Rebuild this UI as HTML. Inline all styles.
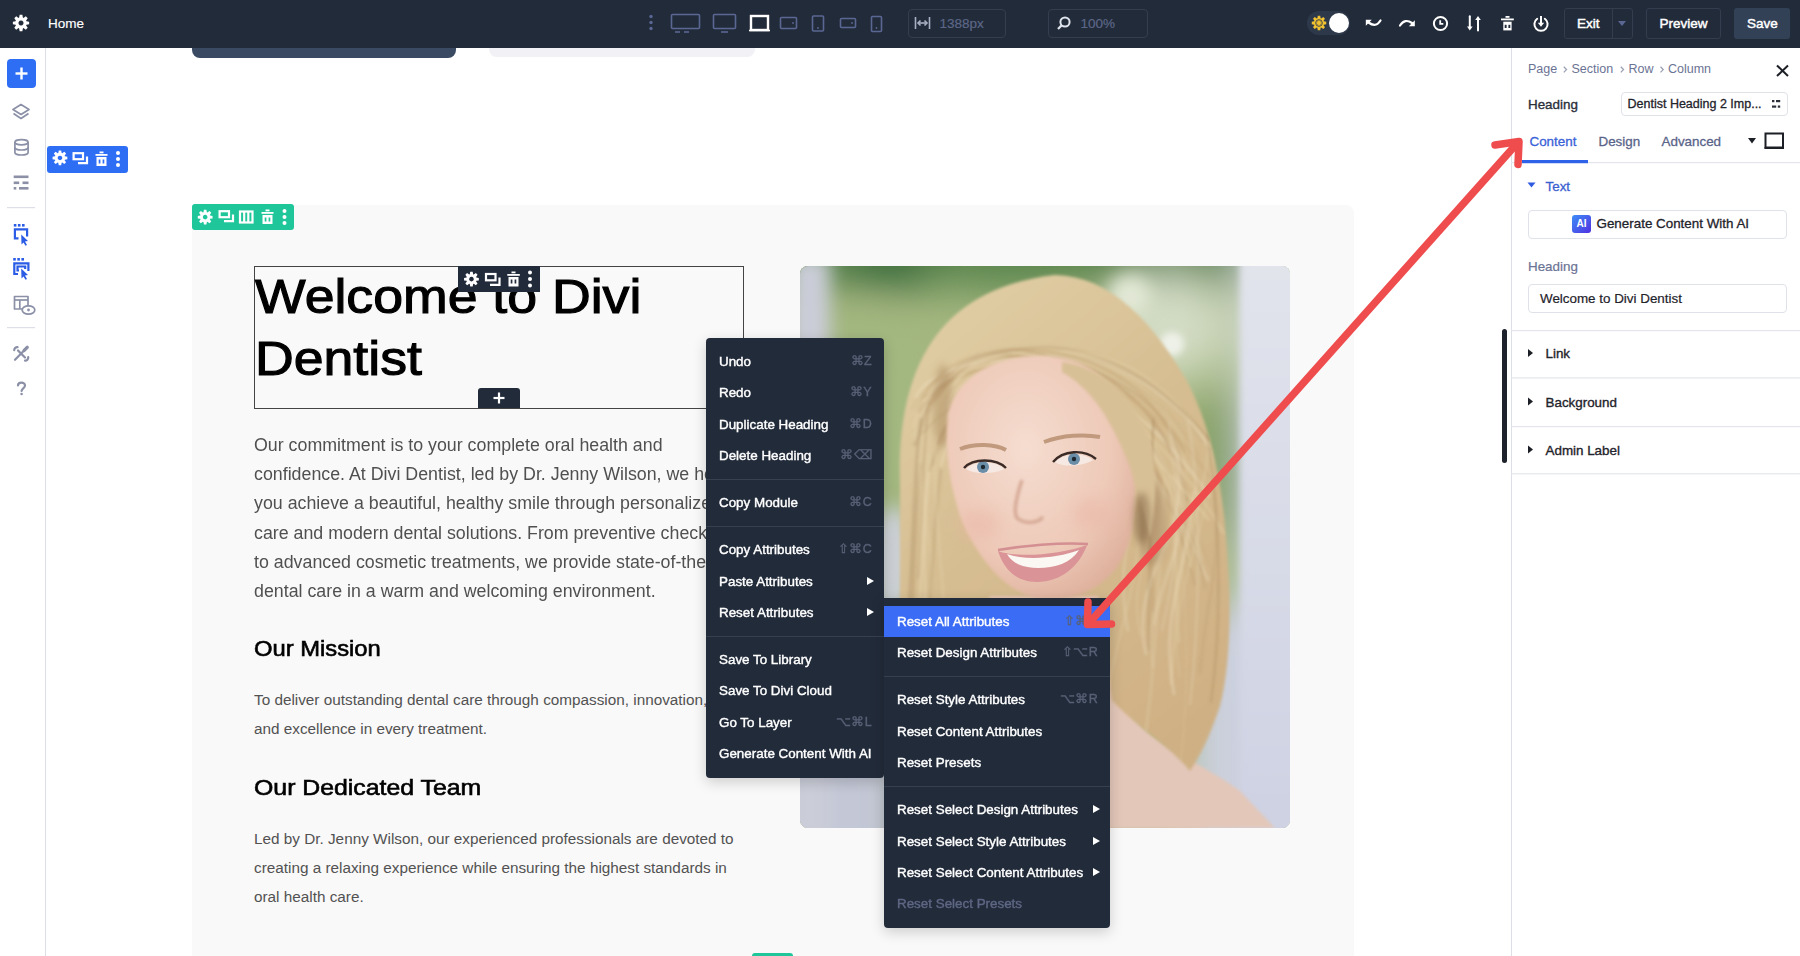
<!DOCTYPE html>
<html><head><meta charset="utf-8">
<style>
*{box-sizing:border-box;margin:0;padding:0}
html,body{width:1800px;height:956px;overflow:hidden;background:#fff;font-family:"Liberation Sans",sans-serif}
.a{position:absolute}
#top{z-index:10;left:0;top:0;width:1800px;height:48px;background:#222b3a}
#side{left:0;top:48px;width:46px;height:908px;background:#fff;border-right:1px solid #dcdfe6}
#canvas{left:46px;top:48px;width:1465px;height:908px;background:#fff;overflow:hidden}
#panel{left:1511px;top:48px;width:289px;height:908px;background:#fff;box-shadow:inset 1px 0 0 #dcdfe6}
.tb{color:#fff;font-size:13.5px;font-weight:normal;-webkit-text-stroke:0.45px #fff;white-space:nowrap}
.pt{white-space:nowrap;line-height:normal}
.ic{stroke:#5b6793;fill:none;stroke-width:1.6}
.mi{position:absolute;left:0;width:100%;height:31.4px;color:#fff;font-size:13.4px;font-weight:normal;-webkit-text-stroke:0.4px currentColor;padding-left:13px;line-height:31.4px;white-space:nowrap}
.mi .k{position:absolute;right:12px;top:0;color:#586176;-webkit-text-stroke:0.35px #586176;font-size:12.5px;letter-spacing:0.3px}
.mi .tri{position:absolute;right:10px;top:11px;width:0;height:0;border-left:7px solid #fff;border-top:4.5px solid transparent;border-bottom:4.5px solid transparent}
.sep{position:absolute;left:0;width:100%;height:1px;background:#36404f}
.body{color:#505050;font-size:17.5px;line-height:29.2px}
.body2{color:#525252;font-size:15.5px;line-height:29.2px}
.h2{color:#000;font-size:22.5px}
</style></head><body>

<svg width="0" height="0" style="position:absolute">
<defs>
<path id="gear" fill-rule="evenodd" d="M9.52 4.82 L10.19 1.15 L13.81 1.15 L14.48 4.82 L15.32 5.17 L18.40 3.05 L20.95 5.60 L18.83 8.68 L19.18 9.52 L22.85 10.19 L22.85 13.81 L19.18 14.48 L18.83 15.32 L20.95 18.40 L18.40 20.95 L15.32 18.83 L14.48 19.18 L13.81 22.85 L10.19 22.85 L9.52 19.18 L8.68 18.83 L5.60 20.95 L3.05 18.40 L5.17 15.32 L4.82 14.48 L1.15 13.81 L1.15 10.19 L4.82 9.52 L5.17 8.68 L3.05 5.60 L5.60 3.05 L8.68 5.17Z M12 8.6 A3.4 3.4 0 1 0 12.01 8.6Z"/>
</defs></svg>
<div id="top" class="a">
 <svg class="a" style="left:12px;top:14px" width="18" height="18" viewBox="0 0 24 24"><use href="#gear" fill="#fff"/></svg>
 <div class="a tb" style="left:48px;top:15.8px;font-size:13.5px;-webkit-text-stroke:0.15px #fff">Home</div>
 <!-- dots -->
 <svg class="a" style="left:647px;top:14px" width="8" height="17"><circle cx="4" cy="2.5" r="1.7" fill="#5b6793"/><circle cx="4" cy="8.5" r="1.7" fill="#5b6793"/><circle cx="4" cy="14.5" r="1.7" fill="#5b6793"/></svg>
 <!-- device icons -->
 <svg class="a" style="left:660px;top:8px" width="240" height="30">
  <g class="ic">
   <rect x="11.5" y="6.5" width="28" height="14" rx="1"/>
   <line x1="15" y1="24" x2="20" y2="24"/><line x1="24" y1="24" x2="29" y2="24"/>
   <rect x="53.5" y="6.5" width="22" height="14" rx="1"/>
   <line x1="61" y1="24" x2="68" y2="24"/>
   <rect x="120.5" y="9.5" width="16" height="11" rx="1"/>
   <rect x="152.5" y="8" width="11" height="15" rx="1"/>
   <rect x="180.5" y="10.5" width="15" height="9" rx="1"/>
   <rect x="211.5" y="8.5" width="10" height="15" rx="1"/>
  </g>
  <g fill="#5b6793"><circle cx="133" cy="15" r="0.9"/><circle cx="158" cy="20" r="0.9"/><circle cx="192" cy="15" r="0.9"/><circle cx="216.5" cy="20" r="0.9"/></g>
  <rect x="91" y="8" width="17" height="14" fill="none" stroke="#fff" stroke-width="2.4"/>
  <line x1="89" y1="22.5" x2="110" y2="22.5" stroke="#fff" stroke-width="1.6"/>
 </svg>
 <!-- width input -->
 <div class="a" style="left:908px;top:9px;width:98px;height:29px;border:1px solid #343e4f;border-radius:4px"></div>
 <svg class="a" style="left:914px;top:16px" width="18" height="14"><g stroke="#a9b0c4" stroke-width="1.6" fill="none"><line x1="1.5" y1="1" x2="1.5" y2="13"/><line x1="15.5" y1="1" x2="15.5" y2="13"/><line x1="4" y1="7" x2="13" y2="7"/><polyline points="6.5,4.5 4,7 6.5,9.5"/><polyline points="10.5,4.5 13,7 10.5,9.5"/></g></svg>
 <div class="a" style="left:939.5px;top:15.8px;color:#5c6787;font-size:13.5px;-webkit-text-stroke:0.2px #5c6787">1388px</div>
 <!-- zoom input -->
 <div class="a" style="left:1048px;top:9px;width:100px;height:29px;border:1px solid #343e4f;border-radius:4px"></div>
 <svg class="a" style="left:1056px;top:15px" width="16" height="16"><circle cx="9" cy="7" r="4.6" stroke="#dfe3ec" stroke-width="2" fill="none"/><line x1="5.6" y1="10.4" x2="2" y2="14" stroke="#dfe3ec" stroke-width="2.2"/></svg>
 <div class="a" style="left:1080.5px;top:15.8px;color:#5c6787;font-size:13.5px;-webkit-text-stroke:0.2px #5c6787">100%</div>
 <!-- toggle -->
 <div class="a" style="left:1307px;top:11px;width:43px;height:24px;border-radius:12px;background:#2d394b"></div>
 <svg class="a" style="left:1311px;top:15px" width="16" height="16" viewBox="0 0 24 24"><use href="#gear" fill="#f2c230"/><circle cx="12" cy="12" r="3.2" fill="#f2c230"/><circle cx="12" cy="12" r="5" fill="none" stroke="#2d394b" stroke-width="1.3"/></svg>
 <div class="a" style="left:1329px;top:13px;width:20px;height:20px;border-radius:50%;background:#fff"></div>
 <!-- undo redo etc -->
 <svg class="a" style="left:1362px;top:13px" width="200" height="22">
  <g stroke="#fff" stroke-width="2.2" fill="none" stroke-linecap="round">
   <path d="M18.5 7.5 Q14 15 6.5 9.5"/>
   <path d="M38 12.5 Q43 5 50 10"/>
   <circle cx="78.5" cy="10.5" r="6.6" stroke-width="2"/><polyline points="78.2,7.3 78.2,10.8 81.3,10.8" stroke-width="1.8" stroke-linecap="butt"/>
   <line x1="107.8" y1="3.3" x2="107.8" y2="14" stroke-width="2"/>
   <line x1="116" y1="6" x2="116" y2="17.4" stroke-width="2"/>
   <path d="M182.79 5.79 A6.6 6.6 0 1 1 175.21 5.79" stroke-width="2"/>
   <line x1="179" y1="3" x2="179" y2="10.5" stroke-width="2" stroke-linecap="butt"/>
  </g>
  <g fill="#fff">
   <polygon points="3.8,6.8 9.8,6.8 3.8,12.8"/>
   <polygon points="52.8,7.2 52.8,13.2 46.8,13.2"/>
   <polygon points="105,13.5 110.6,13.5 107.8,17.4"/>
   <polygon points="113.2,7 118.8,7 116,3.1"/>
   <polygon points="175.8,9.8 182.2,9.8 179,13.8"/>
   <rect x="141.3" y="8.7" width="8.3" height="8.7"/><rect x="139" y="5.5" width="12.8" height="1.8"/><rect x="143.5" y="3" width="4" height="1.8"/>
  </g>
  <g fill="#222b3a"><rect x="142.7" y="11.8" width="1.9" height="3.2"/><rect x="146.4" y="11.8" width="1.9" height="3.2"/></g>
 </svg>
 <!-- exit -->
 <div class="a" style="left:1564px;top:8px;width:69px;height:31px;border:1px solid #333d4e;border-radius:3px"></div>
 <div class="a" style="left:1612px;top:8px;width:1px;height:31px;background:#333d4e"></div>
 <div class="a tb" style="left:1577px;top:15.7px">Exit</div>
 <div class="a" style="left:1618px;top:21px;border-top:5px solid #5b6793;border-left:4px solid transparent;border-right:4px solid transparent"></div>
 <div class="a" style="left:1646px;top:8px;width:75px;height:31px;border:1px solid #333d4e;border-radius:3px"></div>
 <div class="a tb" style="left:1659.5px;top:15.7px">Preview</div>
 <div class="a" style="left:1734px;top:8px;width:56px;height:31px;background:#334157;border-radius:3px"></div>
 <div class="a tb" style="left:1747px;top:15.7px">Save</div>
</div>

<!-- SIDEBAR -->
<div id="side" class="a">
 <div class="a" style="left:7px;top:11px;width:29px;height:29px;background:#2e6ef5;border-radius:4px"></div>
 <svg class="a" style="left:0;top:0" width="45" height="420">
  <g stroke="#fff" stroke-width="2.4"><line x1="21.5" y1="19.5" x2="21.5" y2="31.5"/><line x1="15.5" y1="25.5" x2="27.5" y2="25.5"/></g>
  <g stroke="#8b90a7" stroke-width="1.7" fill="none" stroke-linejoin="round">
   <path d="M21 56.5 L29 61.5 L21 66.5 L13 61.5 Z"/>
   <path d="M13.5 65.5 L21 70.5 L28.5 65.5"/>
   <ellipse cx="21.5" cy="94.3" rx="6.6" ry="2.6"/>
   <path d="M14.9 94.3 V104.4 A6.6 2.6 0 0 0 28.1 104.4 V94.3"/>
   <path d="M14.9 99.4 A6.6 2.6 0 0 0 28.1 99.4"/>
   <rect x="14.5" y="248.5" width="13.5" height="12.5"/>
   <line x1="14.5" y1="252" x2="28" y2="252"/><line x1="19.8" y1="252" x2="19.8" y2="261"/>
  </g>
  <g fill="#8b90a7">
   <rect x="13.7" y="127.5" width="14.8" height="2.6"/>
   <rect x="13.7" y="133.5" width="5.5" height="2.6"/><rect x="22.5" y="133.5" width="6" height="2.6"/>
   <rect x="13.7" y="139" width="2.6" height="2.6"/><rect x="19" y="139" width="9.5" height="2.6"/>
  </g>
  <ellipse cx="28.5" cy="262" rx="6.3" ry="4.2" fill="#fff" stroke="#8b90a7" stroke-width="1.7"/>
  <circle cx="28.5" cy="262" r="1.4" fill="#8b90a7"/>
  <g stroke="#dde0e7" stroke-width="1.2"><line x1="7" y1="159.6" x2="35" y2="159.6"/><line x1="7" y1="279.6" x2="35" y2="279.6"/></g>
  <g fill="#2b5ce6">
   <rect x="13.8" y="176" width="2.6" height="2.6"/><rect x="17.9" y="176" width="2.6" height="2.6"/><rect x="22" y="176" width="2.6" height="2.6"/>
   <rect x="13.2" y="210" width="2.6" height="2.6"/><rect x="17.3" y="210" width="2.6" height="2.6"/><rect x="21.4" y="210" width="2.6" height="2.6"/>
   <path d="M21.2 186.5 L28 193 L25 193.6 L27 197 L25.5 197.8 L23.5 194.5 L21.5 196.5Z"/>
   <path d="M21.2 220.5 L28 227 L25 227.6 L27 231 L25.5 231.8 L23.5 228.5 L21.5 230.5Z"/>
  </g>
  <g stroke="#2b5ce6" stroke-width="2.2" fill="none">
   <polyline points="18.5,190.4 14.9,190.4 14.9,181.3 27.1,181.3 27.1,188.5"/>
   <polyline points="18,226 14.3,226 14.3,215.3 28.4,215.3 28.4,223"/>
   <polyline points="19,222.5 17.5,222.5 17.5,218.5 25.2,218.5 25.2,221"/>
  </g>
  <g stroke="#8b90a7" stroke-width="2.2" fill="none" stroke-linecap="round">
   <line x1="26.8" y1="299.8" x2="15" y2="311.8"/>
   <line x1="18" y1="302.5" x2="25" y2="309.5"/>
   <path d="M14.2 302.2 A3 3 0 0 1 17.6 299.2"/>
   <path d="M28.2 309.2 A3 3 0 0 1 25 312.6"/>
   <path d="M18 337.5 C18 333.8 25 333.6 25 337.6 C25 340.2 21.6 340.6 21.6 343"/>
  </g>
  <line x1="27.2" y1="299.4" x2="24.2" y2="302.4" stroke="#8b90a7" stroke-width="3.4" stroke-linecap="round"/>
  <circle cx="21.6" cy="346" r="1.3" fill="#8b90a7"/>
 </svg>
</div>
<!-- CANVAS -->
<div id="canvas" class="a"></div>
<!-- remnants at top -->
<div class="a" style="left:192px;top:40px;width:264px;height:18px;background:#3b4a63;border-radius:0 0 8px 8px"></div>
<div class="a" style="left:489px;top:40px;width:266px;height:17px;background:#f1f1f6;border-radius:0 0 8px 8px"></div>
<!-- blue row toolbar -->
<div class="a" style="left:46.5px;top:146px;width:81.5px;height:26.5px;background:#2e6ef5;border-radius:3px"></div>
<svg class="a" style="left:46px;top:146px" width="82" height="26">
 <use href="#gear" fill="#fff" transform="translate(5.8,3.8) scale(0.68)"/>
 <g stroke="#fff" stroke-width="2.2" fill="none"><rect x="27.6" y="7.2" width="9.4" height="6"/><polyline points="32,17.2 41,17.2 41,10.5"/></g>
 <g fill="#fff"><rect x="50.5" y="11" width="10" height="9"/><rect x="49.5" y="8" width="12" height="1.8"/><rect x="53.5" y="5.5" width="4" height="1.8"/></g>
 <g fill="#2e6ef5"><rect x="52.7" y="13.5" width="1.7" height="4"/><rect x="56.6" y="13.5" width="1.7" height="4"/></g>
 <g fill="#fff"><circle cx="72" cy="7" r="2"/><circle cx="72" cy="13" r="2"/><circle cx="72" cy="19" r="2"/></g>
</svg>
<!-- section -->
<div class="a" style="left:192px;top:205px;width:1162px;height:760px;background:#f9f9f9;border-radius:8px 8px 0 0"></div>
<!-- green toolbar -->
<div class="a" style="left:192px;top:204px;width:102px;height:26px;background:#1fc69a;border-radius:3px"></div>
<svg class="a" style="left:192px;top:204px" width="102" height="26">
 <use href="#gear" fill="#fff" transform="translate(5,5) scale(0.68)"/>
 <g stroke="#fff" stroke-width="2.2" fill="none"><rect x="27.6" y="7.2" width="9.4" height="6"/><polyline points="32,17.2 41,17.2 41,10.5"/>
 <rect x="48" y="7.5" width="12.5" height="11"/><line x1="52.2" y1="7.5" x2="52.2" y2="18.5"/><line x1="56.3" y1="7.5" x2="56.3" y2="18.5"/></g>
 <g fill="#fff"><rect x="70.5" y="11" width="10" height="9"/><rect x="69.5" y="8" width="12" height="1.8"/><rect x="73.5" y="5.5" width="4" height="1.8"/></g>
 <g fill="#1fc69a"><rect x="72.7" y="13.5" width="1.7" height="4"/><rect x="76.6" y="13.5" width="1.7" height="4"/></g>
 <g fill="#fff"><circle cx="92.5" cy="7" r="2"/><circle cx="92.5" cy="13" r="2"/><circle cx="92.5" cy="19" r="2"/></g>
</svg>
<!-- heading module -->
<div class="a" style="left:254px;top:266px;width:490px;height:143px;border:1.3px solid #444"></div>
<div class="a" id="h1" style="left:255px;top:266px;font-size:48px;font-weight:normal;-webkit-text-stroke:1.1px #000;transform:scaleX(1.117);transform-origin:0 0;line-height:62px;color:#000;white-space:nowrap"><span>Welcome to Divi</span><br><span>Dentist</span></div>
<div class="a" style="left:458px;top:266px;width:82px;height:26px;background:#222b3a"></div>
<svg class="a" style="left:458px;top:266px" width="82" height="26">
 <use href="#gear" fill="#fff" transform="translate(5.3,5) scale(0.68)"/>
 <g stroke="#fff" stroke-width="2.2" fill="none"><rect x="28" y="8" width="9.5" height="6.3"/><polyline points="32,18.8 41.5,18.8 41.5,11.5"/></g>
 <g fill="#fff"><rect x="50.5" y="11" width="10" height="9.5"/><rect x="49.3" y="8" width="12.5" height="1.8"/><rect x="53.5" y="5.5" width="4" height="1.8"/></g>
 <g fill="#222b3a"><rect x="52.7" y="13.5" width="1.7" height="4"/><rect x="56.6" y="13.5" width="1.7" height="4"/></g>
 <g fill="#fff"><circle cx="72" cy="6.5" r="2"/><circle cx="72" cy="13" r="2"/><circle cx="72" cy="19.5" r="2"/></g>
</svg>
<div class="a" style="left:478px;top:388px;width:42px;height:20px;background:#222b3a;border-radius:3px 3px 0 0"></div>
<svg class="a" style="left:478px;top:388px" width="42" height="20"><g stroke="#fff" stroke-width="2.2"><line x1="21" y1="4.5" x2="21" y2="15.5"/><line x1="15.5" y1="10" x2="26.5" y2="10"/></g></svg>
<!-- body texts -->
<div class="a body" id="p1" style="left:254px;top:431px;transform:scaleX(1.017);transform-origin:0 0;white-space:nowrap"><span>Our commitment is to your complete oral health and</span><br><span>confidence. At Divi Dentist, led by Dr. Jenny Wilson, we help</span><br><span>you achieve a beautiful, healthy smile through personalized</span><br><span>care and modern dental solutions. From preventive checkups</span><br><span>to advanced cosmetic treatments, we provide state-of-the-art</span><br><span>dental care in a warm and welcoming environment.</span></div>
<div class="a h2" id="h2a" style="left:254px;top:637px;font-weight:normal;-webkit-text-stroke:0.6px #000;font-size:21.5px;transform:scaleX(1.105);transform-origin:0 0;white-space:nowrap"><span>Our Mission</span></div>
<div class="a body2" id="p2" style="left:254px;top:685px;font-size:15.3px;white-space:nowrap"><span>To deliver outstanding dental care through compassion, innovation,</span><br><span>and excellence in every treatment.</span></div>
<div class="a h2" id="h2b" style="left:254px;top:775.5px;font-weight:normal;-webkit-text-stroke:0.6px #000;font-size:21.5px;transform:scaleX(1.155);transform-origin:0 0;white-space:nowrap"><span>Our Dedicated Team</span></div>
<div class="a body2" id="p3" style="left:254px;top:824px;font-size:15.3px;white-space:nowrap"><span>Led by Dr. Jenny Wilson, our experienced professionals are devoted to</span><br><span>creating a relaxing experience while ensuring the highest standards in</span><br><span>oral health care.</span></div>
<!-- bottom green tab -->
<div class="a" style="left:752px;top:953px;width:41px;height:5px;background:#1fc69a;border-radius:3px 3px 0 0"></div>
<!-- PHOTO -->
<div class="a" id="photo" style="left:800px;top:266px;width:490px;height:562px;border-radius:8px;overflow:hidden;background:#b9c49d">
<svg width="490" height="562" viewBox="0 0 490 562">
<defs>
 <filter id="b30" x="-50%" y="-50%" width="200%" height="200%"><feGaussianBlur stdDeviation="22"/></filter>
 <filter id="b12" x="-50%" y="-50%" width="200%" height="200%"><feGaussianBlur stdDeviation="9"/></filter>
 <filter id="b5" x="-50%" y="-50%" width="200%" height="200%"><feGaussianBlur stdDeviation="3.5"/></filter>
 <filter id="b2" x="-50%" y="-50%" width="200%" height="200%"><feGaussianBlur stdDeviation="1.6"/></filter>
 <filter id="b1" x="-50%" y="-50%" width="200%" height="200%"><feGaussianBlur stdDeviation="0.7"/></filter>
 <linearGradient id="hairg" x1="0" y1="0" x2="0.5" y2="1">
  <stop offset="0" stop-color="#e3d1a9"/><stop offset="0.5" stop-color="#d6bd91"/><stop offset="1" stop-color="#cfb084"/>
 </linearGradient>
 <linearGradient id="pillar" x1="0" y1="0" x2="0" y2="1">
  <stop offset="0" stop-color="#e2e4ec"/><stop offset="1" stop-color="#cdd1e2"/>
 </linearGradient>
 <radialGradient id="skin" cx="0.42" cy="0.38" r="0.7">
  <stop offset="0" stop-color="#f5ddd0"/><stop offset="0.65" stop-color="#eec9b8"/><stop offset="1" stop-color="#dcae99"/>
 </radialGradient>
</defs>
<rect width="490" height="562" fill="#a3b67f"/>
<g filter="url(#b30)">
 <rect x="-40" y="-40" width="570" height="55" fill="#4f7c46"/>
 <ellipse cx="100" cy="0" rx="60" ry="22" fill="#2f6335"/>
 <ellipse cx="210" cy="0" rx="90" ry="25" fill="#5a854e"/>
 <ellipse cx="70" cy="150" rx="60" ry="100" fill="#a3b881"/>
 <ellipse cx="370" cy="60" rx="60" ry="55" fill="#d3dcc5"/>
 <ellipse cx="418" cy="200" rx="28" ry="80" fill="#7f9c5d"/>
 <rect x="-40" y="360" width="150" height="300" fill="#c3c7d6"/>
 <rect x="445" y="-40" width="90" height="640" fill="url(#pillar)"/>
 <rect x="390" y="480" width="140" height="140" fill="#d2d6e3"/>
 <rect x="385" y="340" width="80" height="260" fill="#ccd0de"/>
</g>
<rect x="-10" y="-10" width="40" height="590" fill="#cbcdd8" filter="url(#b12)"/>
<rect x="440" y="-10" width="70" height="590" fill="url(#pillar)" filter="url(#b5)"/>
<circle cx="372" cy="78" r="12" fill="#eef1e8" filter="url(#b5)"/>
<circle cx="330" cy="30" r="22" fill="#e2e8d6" filter="url(#b12)"/>
<ellipse cx="92" cy="295" rx="22" ry="55" fill="#ccd0d6" filter="url(#b12)"/>
<!-- neck/chest -->
<path d="M175 300 L315 300 L330 440 C350 480 380 500 400 530 L405 562 L150 562 C160 520 170 480 178 440Z" fill="#e8c6b5" filter="url(#b5)"/>
<path d="M300 415 C330 470 400 495 440 525 L475 562 L290 562Z" fill="#e3c7b9" filter="url(#b2)"/>
<!-- hair mass -->
<path d="M100 220 C96 100 140 22 255 9 C310 10 352 55 387 115 C410 160 424 215 428 300 C432 360 428 410 420 440 C410 470 400 490 390 505 C370 480 335 460 312 434 C306 390 302 350 298 330 L190 330 C180 380 170 440 150 500 L140 562 L96 562 C98 480 100 420 100 330Z" fill="url(#hairg)" filter="url(#b2)"/>
<!-- soft hair texture -->
<clipPath id="hairclip"><path d="M100 220 C96 100 140 22 255 9 C310 10 352 55 387 115 C410 160 424 215 428 300 C432 360 428 410 420 440 C410 470 400 490 390 505 C370 480 335 460 312 434 C306 390 302 350 298 330 L190 330 C180 380 170 440 150 500 L140 562 L96 562 C98 480 100 420 100 330Z"/></clipPath>
<g fill="none" clip-path="url(#hairclip)" filter="url(#b2)" stroke-linecap="round">
<path d="M116 179 C134 59 316 40 403 176" stroke="#a9875a" stroke-width="2.0" opacity="0.32"/>
<path d="M112 171 C187 69 331 45 406 178" stroke="#e9d6ae" stroke-width="1.3" opacity="0.49"/>
<path d="M116 131 C149 75 303 71 409 230" stroke="#f3e8cf" stroke-width="2.6" opacity="0.41"/>
<path d="M130 168 C177 60 355 64 391 199" stroke="#e9d6ae" stroke-width="1.4" opacity="0.35"/>
<path d="M124 160 C167 34 326 50 395 319" stroke="#a9875a" stroke-width="1.3" opacity="0.43"/>
<path d="M133 199 C149 77 332 80 401 304" stroke="#b8976a" stroke-width="2.1" opacity="0.43"/>
<path d="M138 178 C190 71 310 54 410 174" stroke="#a9875a" stroke-width="1.9" opacity="0.42"/>
<path d="M119 146 C174 54 354 70 387 234" stroke="#b8976a" stroke-width="3.0" opacity="0.48"/>
<path d="M121 157 C152 90 357 56 388 207" stroke="#e9d6ae" stroke-width="1.2" opacity="0.48"/>
<path d="M121 133 C162 60 312 41 419 322" stroke="#c9ab7c" stroke-width="2.6" opacity="0.28"/>
<path d="M141 199 C178 62 318 54 409 180" stroke="#efe1c2" stroke-width="3.2" opacity="0.38"/>
<path d="M134 129 C164 54 356 69 383 203" stroke="#a9875a" stroke-width="1.5" opacity="0.33"/>
<path d="M125 131 C181 87 323 66 384 186" stroke="#b8976a" stroke-width="2.7" opacity="0.39"/>
<path d="M131 138 C187 56 338 99 414 218" stroke="#c9ab7c" stroke-width="2.9" opacity="0.44"/>
<path d="M125 135 C176 57 345 55 390 300" stroke="#e9d6ae" stroke-width="2.8" opacity="0.48"/>
<path d="M119 167 C151 37 292 62 392 281" stroke="#b8976a" stroke-width="2.1" opacity="0.51"/>
<path d="M148 153 C143 53 304 62 408 314" stroke="#efe1c2" stroke-width="2.2" opacity="0.43"/>
<path d="M113 179 C185 83 343 75 388 296" stroke="#b8976a" stroke-width="1.4" opacity="0.51"/>
<path d="M129 187 C135 44 360 46 407 244" stroke="#c9ab7c" stroke-width="1.5" opacity="0.48"/>
<path d="M136 152 C163 47 291 108 409 254" stroke="#e9d6ae" stroke-width="2.1" opacity="0.49"/>
<path d="M118 143 C148 51 331 62 399 191" stroke="#c9ab7c" stroke-width="1.9" opacity="0.38"/>
<path d="M146 158 C185 62 327 73 381 240" stroke="#e9d6ae" stroke-width="2.4" opacity="0.46"/>
<path d="M116 176 C137 27 338 65 402 294" stroke="#f3e8cf" stroke-width="1.3" opacity="0.32"/>
<path d="M114 161 C132 74 294 50 424 267" stroke="#e9d6ae" stroke-width="2.6" opacity="0.38"/>
<path d="M129 205 C172 83 356 56 405 321" stroke="#a9875a" stroke-width="1.5" opacity="0.29"/>
<path d="M113 142 C134 69 345 93 387 285" stroke="#c9ab7c" stroke-width="1.9" opacity="0.33"/>
<path d="M342 206 C368 286 326 290 340 370" stroke="#e6d3ab" stroke-width="1.6" opacity="0.36"/>
<path d="M376 191 C395 271 327 308 346 388" stroke="#f1e5ca" stroke-width="2.3" opacity="0.42"/>
<path d="M365 212 C359 292 356 426 339 506" stroke="#e6d3ab" stroke-width="3.4" opacity="0.29"/>
<path d="M354 155 C349 235 350 265 353 345" stroke="#b08f62" stroke-width="2.1" opacity="0.38"/>
<path d="M376 209 C398 289 340 321 353 401" stroke="#efe1c2" stroke-width="1.8" opacity="0.27"/>
<path d="M338 181 C339 261 313 285 328 365" stroke="#efe1c2" stroke-width="2.0" opacity="0.39"/>
<path d="M413 182 C413 262 364 331 380 411" stroke="#e6d3ab" stroke-width="1.8" opacity="0.30"/>
<path d="M414 225 C422 305 407 326 400 406" stroke="#b08f62" stroke-width="2.0" opacity="0.27"/>
<path d="M353 152 C350 232 348 304 349 384" stroke="#9e7e52" stroke-width="1.4" opacity="0.45"/>
<path d="M369 209 C379 289 378 338 371 418" stroke="#e6d3ab" stroke-width="2.0" opacity="0.45"/>
<path d="M394 226 C386 306 359 348 374 428" stroke="#efe1c2" stroke-width="2.6" opacity="0.46"/>
<path d="M369 157 C379 237 381 284 362 364" stroke="#f1e5ca" stroke-width="1.8" opacity="0.33"/>
<path d="M371 169 C400 249 373 278 354 358" stroke="#f1e5ca" stroke-width="1.9" opacity="0.27"/>
<path d="M409 176 C403 256 370 296 379 376" stroke="#e6d3ab" stroke-width="1.8" opacity="0.43"/>
<path d="M338 248 C344 328 297 406 305 486" stroke="#e6d3ab" stroke-width="1.4" opacity="0.48"/>
<path d="M407 169 C421 249 422 356 411 436" stroke="#9e7e52" stroke-width="1.5" opacity="0.43"/>
<path d="M388 155 C403 235 399 359 390 439" stroke="#f1e5ca" stroke-width="1.5" opacity="0.38"/>
<path d="M375 250 C389 330 391 444 376 524" stroke="#e6d3ab" stroke-width="1.4" opacity="0.27"/>
<path d="M129 207 C121 267 128 342 123 402" stroke="#efe1c2" stroke-width="2.3" opacity="0.38"/>
<path d="M131 169 C123 229 121 339 116 399" stroke="#efe1c2" stroke-width="2.4" opacity="0.28"/>
<path d="M133 150 C125 210 125 267 120 327" stroke="#e6d3ab" stroke-width="1.6" opacity="0.38"/>
<path d="M121 198 C113 258 113 379 108 439" stroke="#b08f62" stroke-width="2.6" opacity="0.38"/>
<path d="M129 136 C121 196 123 252 118 312" stroke="#b08f62" stroke-width="2.3" opacity="0.29"/>
<path d="M122 169 C114 229 136 269 131 329" stroke="#e6d3ab" stroke-width="2.4" opacity="0.32"/>
<path d="M123 167 C115 227 125 269 120 329" stroke="#e6d3ab" stroke-width="1.8" opacity="0.28"/>
<path d="M121 153 C113 213 113 294 108 354" stroke="#a5855a" stroke-width="3.0" opacity="0.34"/>
<path d="M141 204 C133 264 133 303 128 363" stroke="#b08f62" stroke-width="2.9" opacity="0.29"/>
<path d="M137 171 C129 231 149 331 144 391" stroke="#e6d3ab" stroke-width="2.1" opacity="0.43"/>
<ellipse cx="352" cy="258" rx="14" ry="42" fill="#8a6a48" opacity="0.34" filter="url(#b5)"/>
</g>
<ellipse cx="143" cy="140" rx="10" ry="42" fill="#a8865c" opacity="0.45" filter="url(#b5)"/>
<!-- face -->
<path d="M148 148 C158 108 198 90 240 90 C276 91 302 102 322 140 C334 170 337 215 334 250 C331 285 318 305 300 318 C278 334 255 334 237 332 C205 326 178 292 162 255 C150 222 144 185 148 148Z" fill="url(#skin)" filter="url(#b2)"/>
<!-- side-swept bangs over right forehead -->
<path d="M262 96 C300 100 335 130 350 175 C358 205 356 240 350 272 C342 238 334 208 322 182 C308 150 290 122 262 106Z" fill="#d8c096" filter="url(#b2)"/>
<ellipse cx="342" cy="252" rx="8" ry="26" fill="#7d5f40" filter="url(#b5)" opacity="0.5"/>
<!-- eyebrows -->
<path d="M160 183 C175 177 195 178 206 184" stroke="#c19a7e" stroke-width="4" fill="none" filter="url(#b1)"/>
<path d="M244 176 C262 169 285 168 300 171" stroke="#c19a7e" stroke-width="4" fill="none" filter="url(#b1)"/>
<!-- eyes -->
<path d="M166 203 C175 194 195 194 204 203 C195 208 175 209 166 203Z" fill="#f6e9e4" filter="url(#b1)"/>
<circle cx="183" cy="201" r="6" fill="#6b8ea8" filter="url(#b1)"/>
<circle cx="183" cy="201" r="2.2" fill="#1e2830"/>
<path d="M164 202 C173 192 196 192 206 202" stroke="#3a2c26" stroke-width="2.4" fill="none" filter="url(#b1)"/>
<path d="M255 196 C264 187 283 186 293 194 C284 200 264 202 255 196Z" fill="#f6e9e4" filter="url(#b1)"/>
<circle cx="274" cy="193" r="6" fill="#6b8ea8" filter="url(#b1)"/>
<circle cx="274" cy="193" r="2.2" fill="#1e2830"/>
<path d="M253 196 C263 184 284 183 296 193" stroke="#3a2c26" stroke-width="2.4" fill="none" filter="url(#b1)"/>
<!-- nose shading -->
<path d="M222 214 C216 232 213 246 217 252 C224 258 237 258 243 251" stroke="#d6a996" stroke-width="3.5" fill="none" filter="url(#b2)"/>
<!-- cheeks -->
<ellipse cx="180" cy="258" rx="20" ry="14" fill="#eab5a5" filter="url(#b12)" opacity="0.55"/>
<ellipse cx="292" cy="248" rx="20" ry="14" fill="#eab5a5" filter="url(#b12)" opacity="0.55"/>
<!-- mouth -->
<path d="M198 285 C216 292 260 289 287 279 C280 299 262 316 237 316 C217 316 204 304 198 285Z" fill="#da9396" filter="url(#b1)"/>
<path d="M207 288 C226 295 258 292 279 284 C271 297 255 302 238 302 C223 302 212 297 207 288Z" fill="#fbf7f2" filter="url(#b1)"/>
<path d="M198 284 C222 280 260 276 288 278" stroke="#d48f92" stroke-width="2.6" fill="none" filter="url(#b1)"/>
</svg>
</div>

<!-- CONTEXT MENU -->
<div class="a menu" style="left:706px;top:338px;width:178px;height:439.6px;background:#222b3a;border-radius:4px;box-shadow:0 4px 14px rgba(0,0,0,.18)">
<div class="mi" style="top:8.0px">Undo<span class="k">⌘Z</span></div>
<div class="mi" style="top:39.4px">Redo<span class="k">⌘Y</span></div>
<div class="mi" style="top:70.8px">Duplicate Heading<span class="k">⌘D</span></div>
<div class="mi" style="top:102.2px">Delete Heading<span class="k">⌘⌫</span></div>
<div class="sep" style="top:141.1px"></div>
<div class="mi" style="top:149.2px">Copy Module<span class="k">⌘C</span></div>
<div class="sep" style="top:188.1px"></div>
<div class="mi" style="top:196.2px">Copy Attributes<span class="k">⇧⌘C</span></div>
<div class="mi" style="top:227.6px">Paste Attributes<span class="tri"></span></div>
<div class="mi" style="top:259.0px">Reset Attributes<span class="tri"></span></div>
<div class="sep" style="top:297.9px"></div>
<div class="mi" style="top:306.0px">Save To Library</div>
<div class="mi" style="top:337.4px">Save To Divi Cloud</div>
<div class="mi" style="top:368.8px">Go To Layer<span class="k">⌥⌘L</span></div>
<div class="mi" style="top:400.2px">Generate Content With AI</div>
</div>
<div class="a menu" style="left:884px;top:598px;width:226px;height:329.8px;background:#222b3a;border-radius:0 4px 4px 4px;box-shadow:0 4px 14px rgba(0,0,0,.18)">
<div class="mi" style="top:8.0px;background:#3b6cf5">Reset All Attributes<span class="k">⇧⌘R</span></div>
<div class="mi" style="top:39.4px">Reset Design Attributes<span class="k">⇧⌥R</span></div>
<div class="sep" style="top:78.3px"></div>
<div class="mi" style="top:86.4px">Reset Style Attributes<span class="k">⌥⌘R</span></div>
<div class="mi" style="top:117.8px">Reset Content Attributes</div>
<div class="mi" style="top:149.2px">Reset Presets</div>
<div class="sep" style="top:188.1px"></div>
<div class="mi" style="top:196.2px">Reset Select Design Attributes<span class="tri"></span></div>
<div class="mi" style="top:227.6px">Reset Select Style Attributes<span class="tri"></span></div>
<div class="mi" style="top:259.0px">Reset Select Content Attributes<span class="tri"></span></div>
<div class="mi" style="top:290.4px;color:#5e6784">Reset Select Presets</div>
</div>
<!-- PANEL -->
<div id="panel" class="a">
 <svg class="a" style="left:0;top:0" width="289" height="440">
  <g stroke="#9aa0b4" stroke-width="1.3" fill="none"><polyline points="52.8,18.8 55.5,21.6 52.8,24.4"/><polyline points="109.8,18.8 112.5,21.6 109.8,24.4"/><polyline points="149.5,18.8 152.2,21.6 149.5,24.4"/></g>
  <g stroke="#1c1f26" stroke-width="2"><line x1="266" y1="17.5" x2="277" y2="28"/><line x1="277" y1="17.5" x2="266" y2="28"/></g>
  <g fill="#2a2f3a"><rect x="261" y="52" width="2.4" height="2.2"/><rect x="265" y="52" width="4.2" height="2.2"/><rect x="261" y="57.5" width="4.2" height="2.2"/><rect x="266.8" y="57.5" width="2.4" height="2.2"/></g>
  <polygon points="237,90 245,90 241,95.5" fill="#1c1f26"/>
  <rect x="254.5" y="85.5" width="17.5" height="14" fill="none" stroke="#1c1f26" stroke-width="2"/>
  <line x1="253.5" y1="100" x2="273" y2="100" stroke="#1c1f26" stroke-width="2"/>
  <rect x="0" y="114" width="289" height="1.2" fill="#e3e5ea"/>
  <rect x="11" y="112" width="66" height="3.2" fill="#2e62e8"/>
  <polygon points="16.5,134.5 24.5,134.5 20.5,139.5" fill="#2e5be0"/>
  <g fill="#1c1f26"><polygon points="17,301 22,305 17,309"/><polygon points="17,349.5 22,353.5 17,357.5"/><polygon points="17,397.5 22,401.5 17,405.5"/></g>
  <g fill="#e3e5ea"><rect x="0" y="282" width="289" height="1.2"/><rect x="0" y="329.3" width="289" height="1.2"/><rect x="0" y="378" width="289" height="1.2"/><rect x="0" y="425.2" width="289" height="1.2"/></g>
 </svg>
 <div class="a pt" style="left:17px;top:14px;color:#6b7394;font-size:12.5px">Page</div>
 <div class="a pt" style="left:60.5px;top:14px;color:#6b7394;font-size:12.5px">Section</div>
 <div class="a pt" style="left:117.5px;top:14px;color:#6b7394;font-size:12.5px">Row</div>
 <div class="a pt" style="left:157px;top:14px;color:#6b7394;font-size:12.5px">Column</div>
 <div class="a pt" style="left:17px;top:49px;color:#2a2f3a;font-size:13.4px;-webkit-text-stroke:0.35px #2a2f3a">Heading</div>
 <div class="a" style="left:109.5px;top:43.5px;width:167px;height:24px;border:1px solid #dfe2e8;border-radius:4px"></div>
 <div class="a pt" style="left:116.5px;top:49px;color:#1f232b;font-size:12.5px;-webkit-text-stroke:0.3px #1f232b">Dentist Heading 2 Imp...</div>
 <div class="a pt" style="left:18.5px;top:86px;color:#3a62d8;font-size:13.4px;-webkit-text-stroke:0.3px #3a62d8">Content</div>
 <div class="a pt" style="left:87.5px;top:86px;color:#5a6489;font-size:13.4px;-webkit-text-stroke:0.3px #5a6489">Design</div>
 <div class="a pt" style="left:150.5px;top:86px;color:#5a6489;font-size:13.4px;-webkit-text-stroke:0.3px #5a6489">Advanced</div>
 <div class="a pt" style="left:34.5px;top:131px;color:#3a5fd0;font-size:13.4px;-webkit-text-stroke:0.3px #3a5fd0">Text</div>
 <div class="a" style="left:17px;top:161.5px;width:259px;height:29px;border:1px solid #dfe2e8;border-radius:4px"></div>
 <div class="a" style="left:61px;top:167px;width:19px;height:18px;border-radius:3px;background:linear-gradient(135deg,#3d8ef8,#5030e0)"></div>
 <div class="a" style="left:61px;top:167px;width:19px;height:18px;color:#fff;font-size:10px;font-weight:bold;text-align:center;line-height:18px">AI</div>
 <div class="a pt" style="left:85.5px;top:168px;color:#1f232b;font-size:13.4px;-webkit-text-stroke:0.3px #1f232b">Generate Content With AI</div>
 <div class="a pt" style="left:17px;top:211px;color:#6b7394;font-size:13.4px;-webkit-text-stroke:0.2px #6b7394">Heading</div>
 <div class="a" style="left:17px;top:236px;width:259px;height:28.5px;border:1px solid #dfe2e8;border-radius:4px"></div>
 <div class="a pt" style="left:29px;top:243px;color:#1f232b;font-size:13.4px;-webkit-text-stroke:0.2px #1f232b">Welcome to Divi Dentist</div>
 <div class="a pt" style="left:34.5px;top:298px;color:#1f232b;font-size:13.4px;-webkit-text-stroke:0.35px #1f232b">Link</div>
 <div class="a pt" style="left:34.5px;top:346.5px;color:#1f232b;font-size:13.4px;-webkit-text-stroke:0.35px #1f232b">Background</div>
 <div class="a pt" style="left:34.5px;top:394.5px;color:#1f232b;font-size:13.4px;-webkit-text-stroke:0.35px #1f232b">Admin Label</div>
</div>
<div class="a" style="left:1502px;top:329px;width:4.5px;height:134px;background:#1e222b;border-radius:3px"></div>
<!-- ARROW -->
<svg class="a" style="left:0;top:0;z-index:20" width="1800" height="956">
 <g stroke="#ef4c4e" stroke-width="7.5" stroke-linecap="round" stroke-linejoin="round" fill="none">
  <line x1="1090" y1="622" x2="1517" y2="143.5"/>
  <polyline points="1495,145 1519,141.5 1518,164.5"/>
  <polyline points="1088,602 1087.5,624.5 1111.5,624"/>
 </g>
</svg>
</body></html>
